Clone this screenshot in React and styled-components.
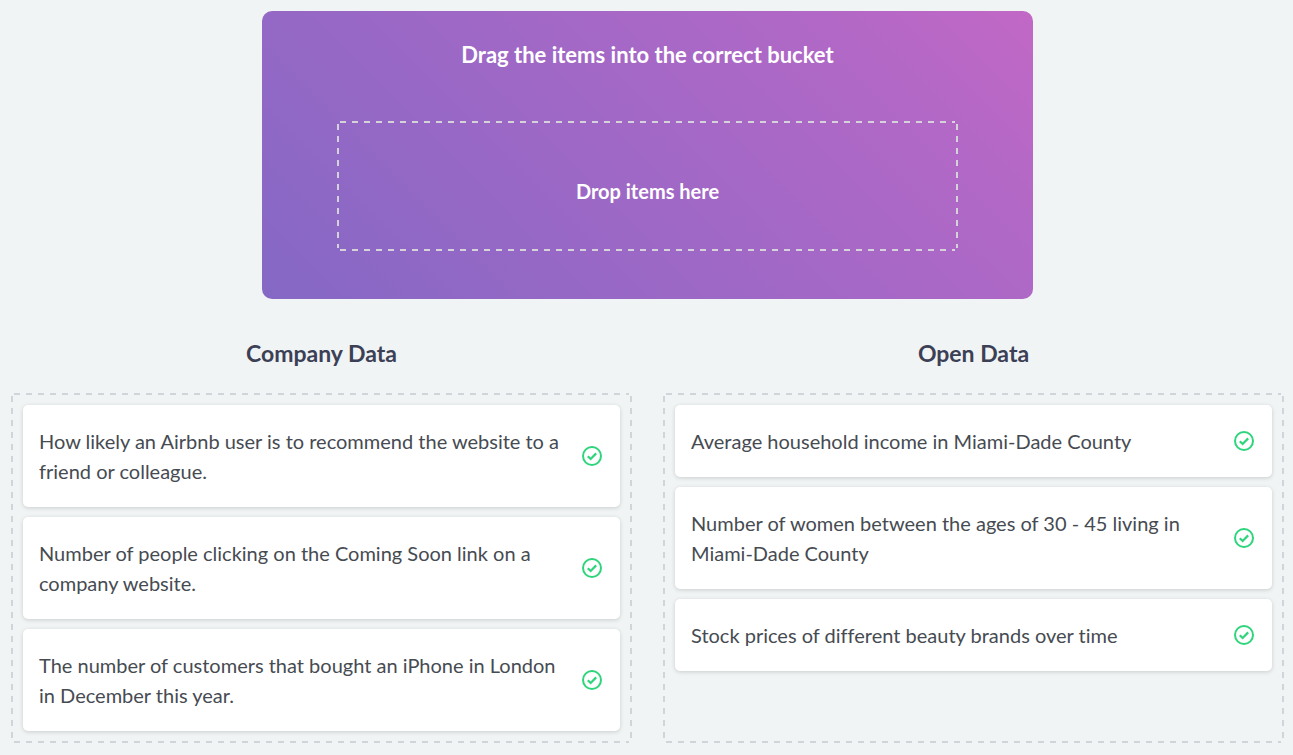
import React from "react";
import styled, { createGlobalStyle, css } from "styled-components";

const GlobalStyle = createGlobalStyle`
  *, *::before, *::after { box-sizing: border-box; }
  body {
    margin: 0;
    background: #f0f4f5;
    color: #464b52;
    font-family: Lato, "Open Sans", sans-serif;
    font-size: 20px;
    line-height: 30px;
    font-variant-ligatures: none;
  }
`;

/* A 2px outline of 6px dashes set 6px apart, open at the corners. */
const dashedOutline = css`
  --across: repeating-linear-gradient(90deg, var(--dash) 0 6px, transparent 6px 12px);
  --down: repeating-linear-gradient(180deg, var(--dash) 0 6px, transparent 6px 12px);
  background-image: var(--across), var(--across), var(--down), var(--down);
  background-repeat: no-repeat;
  background-size: calc(100% - 6px) 2px, calc(100% - 6px) 2px,
    2px calc(100% - 6px), 2px calc(100% - 6px);
  background-position: center top, center bottom, left center, right center;
`;

const Page = styled.main`
  padding: 11px 9px 12px 11px;
`;

const SourcePanel = styled.section`
  max-width: 771px;
  height: 288px;
  margin: 0 auto;
  padding: 28px 75px 48px;
  display: flex;
  flex-direction: column;
  justify-content: space-between;
  border-radius: 10px;
  background: linear-gradient(45deg, #8568c5, #a268c6 52%, #b268c6 80%, #c268c6);
  color: #fff;
  text-align: center;
`;

const Title = styled.h1`
  margin: 0;
  font-size: 22px;
  line-height: 32px;
  font-weight: 700;
`;

const DropZone = styled.div`
  --dash: #d5d3d9;
  ${dashedOutline}
  height: 130px;
  padding-top: 10px;
  display: flex;
  align-items: center;
  justify-content: center;
  font-weight: 700;
`;

const Buckets = styled.div`
  margin-top: 40px;
  display: grid;
  grid-template-columns: 1fr 1fr;
  gap: 31px;
`;

const Bucket = styled.section`
  min-width: 0;
  display: flex;
  flex-direction: column;
`;

const BucketTitle = styled.h2`
  margin: 0 0 26px;
  color: #3c4055;
  font-size: 23px;
  line-height: 28px;
  font-weight: 700;
  text-align: center;
`;

const ItemList = styled.ul`
  --dash: #d3d4d9;
  ${dashedOutline}
  flex: 1;
  margin: 0;
  padding: 12px;
  display: flex;
  flex-direction: column;
  gap: 10px;
  list-style: none;
`;

const Item = styled.li`
  padding: 21px 18px 21px 16px;
  display: flex;
  align-items: center;
  justify-content: space-between;
  gap: 20px;
  border-radius: 5px;
  background: #fff;
  box-shadow: 0 1px 4px rgba(0, 0, 0, 0.16);
`;

const CheckIcon = styled.svg`
  flex: none;
  width: 20px;
  height: 20px;
  fill: none;
  stroke: #2fd57c;
  stroke-width: 2;
`;

const buckets = [
  {
    title: "Company Data",
    items: [
      "How likely an Airbnb user is to recommend the website to a friend or colleague.",
      "Number of people clicking on the Coming Soon link on a company website.",
      "The number of customers that bought an iPhone in London in December this year.",
    ],
  },
  {
    title: "Open Data",
    items: [
      "Average household income in Miami-Dade County",
      "Number of women between the ages of 30 - 45 living in Miami-Dade County",
      "Stock prices of different beauty brands over time",
    ],
  },
];

export default function App() {
  return (
    <Page>
      <GlobalStyle />
      <SourcePanel>
        <Title>Drag the items into the correct bucket</Title>
        <DropZone>Drop items here</DropZone>
      </SourcePanel>
      <Buckets>
        {buckets.map((bucket) => (
          <Bucket key={bucket.title}>
            <BucketTitle>{bucket.title}</BucketTitle>
            <ItemList>
              {bucket.items.map((text) => (
                <Item key={text}>
                  <span>{text}</span>
                  <CheckIcon viewBox="0 0 20 20" role="img" aria-label="Correct">
                    <circle cx="10" cy="10" r="9" />
                    <path d="M5.8 10.2 L8.6 13 L14.2 7.4" strokeWidth="2.2" />
                  </CheckIcon>
                </Item>
              ))}
            </ItemList>
          </Bucket>
        ))}
      </Buckets>
    </Page>
  );
}
